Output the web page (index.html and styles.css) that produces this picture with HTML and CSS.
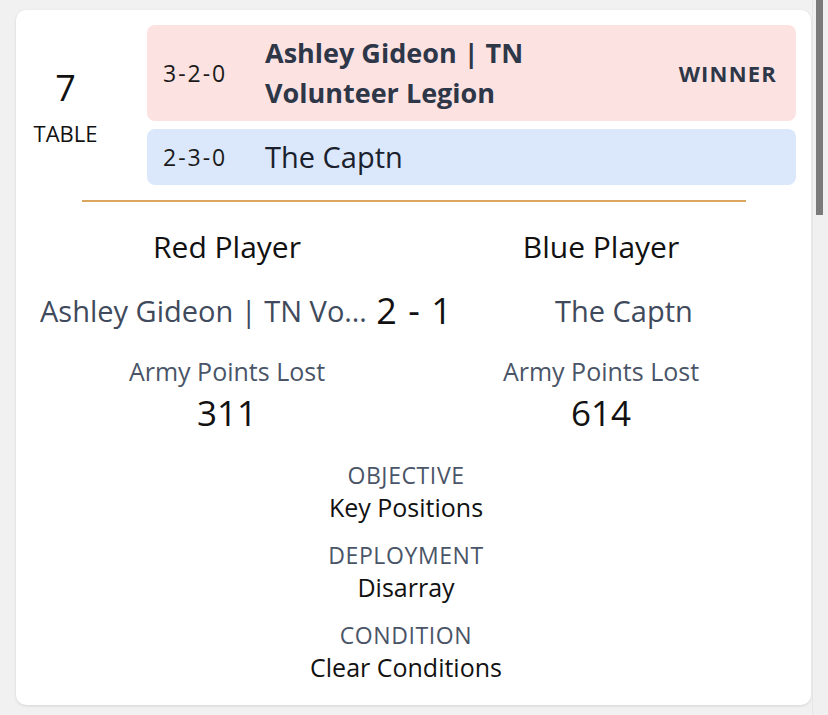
FILE: index.html
```html
<!DOCTYPE html>
<html>
<head>
  <meta charset="UTF-8">
  <title>Table 7</title>
  <meta name="viewport" content="width=device-width, initial-scale=1.0">
  <link rel="stylesheet" href="styles.css">
</head>
<body>
  <div class="page">
    <div class="card">
      <div class="pairing">
        <div class="table-no">
          <div class="num">7</div>
          <div class="label">TABLE</div>
        </div>
        <div class="rows">
          <div class="row red">
            <span class="record">3-2-0</span>
            <span class="name bold">Ashley Gideon | TN Volunteer Legion</span>
            <span class="winner">WINNER</span>
          </div>
          <div class="row blue">
            <span class="record">2-3-0</span>
            <span class="name">The Captn</span>
          </div>
        </div>
      </div>

      <hr class="divider">

      <div class="cols heads">
        <div>Red Player</div>
        <div>Blue Player</div>
      </div>

      <div class="score-line">
        <div class="player">Ashley Gideon | TN Volunteer Legion</div>
        <div class="score">2 - 1</div>
        <div class="player">The Captn</div>
      </div>

      <div class="cols lost-label">
        <div>Army Points Lost</div>
        <div>Army Points Lost</div>
      </div>
      <div class="cols lost">
        <div>311</div>
        <div>614</div>
      </div>

      <div class="info">
        <div class="info-label">OBJECTIVE</div>
        <div class="info-value">Key Positions</div>
        <div class="info-label">DEPLOYMENT</div>
        <div class="info-value">Disarray</div>
        <div class="info-label">CONDITION</div>
        <div class="info-value">Clear Conditions</div>
      </div>
    </div>
  </div>
  <div class="scroll-track"><div class="scroll-thumb"></div></div>
</body>
</html>
```

FILE: styles.css
```css
body {
  margin: 0;
  height: 715px;
  overflow: hidden;
  display: flex;
  background-color: #f1f1f1;
  font-family: "Open Sans", sans-serif;
  color: #111;
}
.page {
  flex: 1;
  padding: 10px 1px 0 16px;
}
.card {
  background: #fff;
  border-radius: 10px;
  box-shadow: 0 1px 3px rgba(0, 0, 0, 0.12);
  height: 695px;
  box-sizing: border-box;
  padding: 15px 15px 0 0;
}
.pairing {
  display: flex;
  align-items: center;
}
.table-no {
  width: 99px;
  margin-right: 32px;
  text-align: center;
  padding-top: 6px;
}
.table-no .num {
  font-size: 36px;
  line-height: 40px;
}
.table-no .label {
  font-size: 22px;
  line-height: 30px;
  margin-top: 10px;
}
.rows {
  flex: 1;
  display: flex;
  flex-direction: column;
  gap: 8px;
}
.row {
  display: flex;
  align-items: center;
  border-radius: 8px;
  padding: 8px 19px 8px 16px;
}
.row.red {
  background-color: #fde2e2;
}
.row.blue {
  background-color: #dbe8fb;
}
.record {
  width: 102px;
  flex: none;
  font-size: 23px;
  letter-spacing: 2px;
  color: #1a1a1a;
}
.name {
  flex: 1;
  font-size: 29px;
  line-height: 40px;
  color: #1a202c;
}
.name.bold {
  font-size: 27px;
  font-weight: 700;
  color: #2d3748;
  max-width: 300px;
  margin-right: auto;
}
.winner {
  font-size: 22px;
  font-weight: 700;
  letter-spacing: 1.2px;
  color: #2d3748;
}
.divider {
  border: none;
  height: 2px;
  background-color: #dba65f;
  width: 664px;
  margin: 15px 0 0 66px;
}
.cols {
  display: grid;
  grid-template-columns: 1fr 1fr;
  padding: 0 8px 0 24px;
  text-align: center;
}
.heads {
  margin-top: 27px;
  font-size: 30px;
  line-height: 36px;
}
.score-line {
  display: flex;
  align-items: center;
  padding: 0 8px 0 24px;
  margin-top: 26px;
  line-height: 40px;
}
.player {
  flex: 1;
  min-width: 0;
  text-align: center;
  white-space: nowrap;
  overflow: hidden;
  text-overflow: ellipsis;
  font-size: 29px;
  color: #3f4a5c;
}
.score {
  margin: 0 8px;
  font-size: 36px;
  word-spacing: 2px;
}
.lost-label {
  margin-top: 25px;
  font-size: 25px;
  line-height: 30px;
  color: #4a5568;
}
.lost {
  margin-top: 7px;
  font-size: 35px;
  line-height: 40px;
}
.info {
  margin-top: 28px;
  text-align: center;
}
.info-label {
  font-size: 23px;
  line-height: 28px;
  letter-spacing: 0.6px;
  color: #4a5568;
}
.info-value {
  font-size: 25px;
  line-height: 32px;
  margin: 2px 0 18px;
}
.scroll-track {
  width: 16px;
  background-color: #f0f0f0;
  border-left: 1px solid #e6e6e6;
  box-sizing: border-box;
  padding-left: 3px;
}
.scroll-thumb {
  width: 7px;
  height: 215px;
  background-color: #7a7a7a;
}
```
